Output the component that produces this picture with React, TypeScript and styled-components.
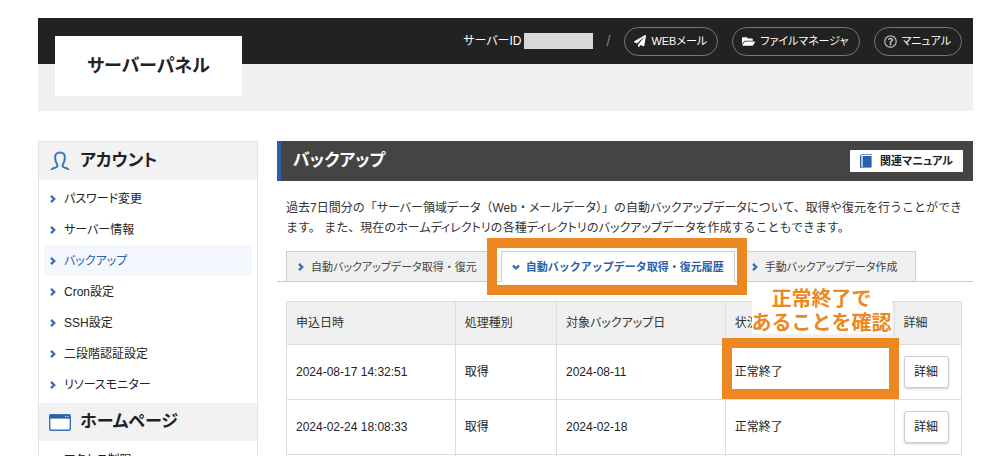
import React from "react";
import styled, { createGlobalStyle, css } from "styled-components";
import { FaPaperPlane, FaFolderOpen, FaRegQuestionCircle } from "react-icons/fa";

const BLUE = "#2b5fa9";
const ORANGE = "#ec8722";
const LINE = "#dddddd";

const GlobalStyle = createGlobalStyle`
  *, *::before, *::after { box-sizing: border-box; }
  body {
    margin: 0;
    background: #fff;
    color: #222;
    font-family: "Liberation Sans", "Noto Sans CJK JP", sans-serif;
    font-feature-settings: "palt";
    font-size: 12px;
    line-height: 20px;
  }
  h1, h2, p, ul { margin: 0; padding: 0; }
  ul { list-style: none; }
  a { color: inherit; text-decoration: none; }
  button { font: inherit; font-feature-settings: inherit; color: inherit; cursor: pointer; }
  svg { display: block; flex: none; }
`;

const Page = styled.div`
  height: calc(100vh - 19px);
  margin: 18px 27px 0 38px;
  overflow: hidden;
`;

const Header = styled.header`
  display: flex;
  justify-content: space-between;
  align-items: flex-start;
  min-height: 93px;
  padding: 0 11px 0 17px;
  background: linear-gradient(#222 0 46px, #f0f0f0 46px);
`;

const Logo = styled.a`
  display: flex;
  align-items: center;
  justify-content: center;
  width: 187px;
  height: 60px;
  margin-top: 18px;
  background: #fff;
  font-size: 18px;
  font-weight: 700;
`;

const Nav = styled.nav`
  display: flex;
  align-items: center;
  gap: 14px;
  height: 46px;
  color: #fff;
`;

const ServerId = styled.div`
  display: flex;
  align-items: center;
  gap: 2px;
`;

const Mask = styled.span`
  width: 69px;
  height: 16px;
  background: #d8d8d8;
`;

const Slash = styled.span`
  color: #888;
  font-size: 14px;
`;

const Pill = styled.a`
  display: flex;
  align-items: center;
  gap: 5px;
  height: 29px;
  padding: 0 10px 0 9px;
  border: 1px solid #777;
  border-radius: 15px;
  font-size: 11px;
`;

const Columns = styled.div`
  display: flex;
  align-items: flex-start;
  gap: 19px;
  margin-top: 30px;
`;

const Sidebar = styled.aside`
  flex: none;
  width: 220px;
  border: 1px solid #e4e4e4;
`;

const SideHeading = styled.h2`
  display: flex;
  align-items: center;
  gap: 9px;
  height: 38px;
  padding-left: 10px;
  background: #f2f2f2;
  font-size: 17px;
  line-height: 24px;
`;

const IconSlot = styled.span`
  display: flex;
  justify-content: center;
  width: 22px;
`;

const SideList = styled.ul`
  padding: 3px 5px;
`;

const SideLink = styled.a<{ $active?: boolean }>`
  display: flex;
  align-items: center;
  gap: 8px;
  height: 31px;
  padding-left: 6px;
  ${(p) => p.$active && css`
    background: #f4f8fe;
    color: ${BLUE};
  `}
`;

const Main = styled.main`
  flex: 1;
  min-width: 0;
`;

const TitleBar = styled.div`
  display: flex;
  align-items: center;
  justify-content: space-between;
  height: 40px;
  padding: 0 10px 0 12px;
  border-left: 4px solid ${BLUE};
  background: #444;
`;

const Title = styled.h1`
  color: #fff;
  font-size: 17px;
  line-height: 24px;
`;

const ManualButton = styled.button`
  display: flex;
  align-items: center;
  gap: 8px;
  height: 22px;
  padding: 0 10px;
  border: 0;
  border-radius: 1px;
  background: #fff;
  font-size: 11px;
  font-weight: 700;
`;

const Description = styled.p`
  margin: 17px 0 13px;
  padding-left: 9px;
  color: #333;
  white-space: nowrap;
`;

const FullWidth = styled.span`
  font-feature-settings: normal;
`;

const Tabs = styled.div`
  display: flex;
  gap: 5px;
  padding-left: 9px;
  border-bottom: 1px solid #ccc;
`;

const Tab = styled.button<{ $active?: boolean }>`
  position: relative;
  display: flex;
  align-items: center;
  gap: 7px;
  height: 31px;
  margin-bottom: -1px;
  padding: 0 18px 0 11px;
  border: 1px solid #ccc;
  background: #f0f0f0;
  color: #444;
  font-size: 11px;
  white-space: nowrap;
  ${(p) => p.$active && css`
    gap: 6px;
    padding: 0 10px;
    border-bottom-color: #fff;
    background: #fff;
    color: ${BLUE};
    font-weight: 700;
    font-feature-settings: normal;
  `}
`;

const TabHighlight = styled.span`
  position: absolute;
  z-index: 1;
  inset: -14px -13px -14px -15px;
  border: 10px solid ${ORANGE};
  pointer-events: none;
`;

const TableWrap = styled.div`
  padding: 19px 11px 0 9px;
`;

const Table = styled.table`
  width: 100%;
  table-layout: fixed;
  border-collapse: collapse;

  th, td {
    padding: 0 9px;
    border: 1px solid ${LINE};
    text-align: left;
    font-weight: 400;
  }
  th {
    height: 43px;
    background: #f0f0f0;
    color: #333;
  }
  td {
    position: relative;
    height: 55px;
  }
`;

const Column = styled.col<{ $share: number }>`
  width: ${(p) => p.$share}%;
`;

const CellHighlight = styled.span`
  position: absolute;
  z-index: 1;
  inset: -7px -5px 0 -4px;
  border: 10px solid ${ORANGE};
  pointer-events: none;
`;

const Note = styled.strong`
  position: absolute;
  right: 2px;
  bottom: calc(100% + 11px);
  width: 140px;
  background: #fff;
  color: ${ORANGE};
  font-family: "Noto Sans CJK JP", sans-serif;
  font-feature-settings: normal;
  font-size: 20px;
  line-height: 24px;
  text-align: center;
  white-space: nowrap;
`;

const DetailButton = styled.button`
  width: 45px;
  height: 32px;
  padding: 0;
  border: 1px solid #ccc;
  border-radius: 3px;
  background: #fff;
  box-shadow: 0 1px 2px rgba(0, 0, 0, 0.2);
`;

const Chevron = ({ down = false }: { down?: boolean }) => (
  <svg width={down ? 8 : 6} height={8} viewBox={down ? "0 0 8 8" : "0 0 6 8"} fill="none" stroke="#3a6fb5" strokeWidth="2.4">
    <path d={down ? "M0.9 2.5 4 5.3 7.1 2.5" : "M1 0.9 4.2 4 1 7.1"} />
  </svg>
);

const PersonIcon = () => (
  <svg width="20" height="20" viewBox="0 0 20 20" fill="none" stroke="#3f74bb" strokeWidth="2">
    <path d="M1.4 19C1.6 17.2 3.4 17.2 5.4 16.6C7.4 16 8 14.8 7.1 13.4C5.8 11.4 5.1 9.4 5.1 6.6C5.1 3 7 1.4 10 1.4S14.9 3 14.9 6.6C14.9 9.4 14.2 11.4 12.9 13.4C12 14.8 12.6 16 14.6 16.6C16.6 17.2 18.4 17.2 18.6 19" />
  </svg>
);

const WindowIcon = () => (
  <svg width="22" height="17" viewBox="0 0 22 17">
    <rect x="0.7" y="0.7" width="20.6" height="15.6" rx="1.2" fill="#fff" stroke="#3a6fb5" strokeWidth="1.4" />
    <path d="M1 1H21V4.6H1Z" fill={BLUE} />
    <path d="M16 2.5H17.2M18.4 2.5H19.6" stroke="#cfdff2" strokeWidth="1.2" />
  </svg>
);

const BookIcon = () => (
  <svg width="12" height="14" viewBox="0 0 12 14">
    <path d="M2 0.5H12M1 1.2V13" fill="none" stroke="#6c93cb" strokeWidth="1" />
    <path d="M0.5 13.4V1.6L1.6 0.5" fill="none" stroke={BLUE} strokeWidth="1" />
    <path d="M2.6 2H11.6V13.6H2.6Z" fill={BLUE} />
    <path d="M0 12.8H3V13.6H0Z" fill={BLUE} />
  </svg>
);

// Katakana is set proportionally; hiragana and punctuation keep their full width.
const Prose = ({ text }: { text: string }) => (
  <span>
    {text.split(/([ぁ-ん「」（）・、。]+)/).map((part, i) =>
      i % 2 ? <FullWidth key={i}>{part}</FullWidth> : part,
    )}
  </span>
);

const accountItems = [
  "パスワード変更",
  "サーバー情報",
  "バックアップ",
  "Cron設定",
  "SSH設定",
  "二段階認証設定",
  "リソースモニター",
];

const rows = [
  { date: "2024-08-17 14:32:51", kind: "取得", target: "2024-08-11", status: "正常終了", marked: true },
  { date: "2024-02-24 18:08:33", kind: "取得", target: "2024-02-18", status: "正常終了", marked: false },
  { date: "", kind: "", target: "", status: "", marked: false },
];

const SideItem = ({ label, active }: { label: string; active?: boolean }) => (
  <li>
    <SideLink href="#" $active={active}>
      <Chevron />
      {label}
    </SideLink>
  </li>
);

export default function App() {
  return (
    <>
      <GlobalStyle />
      <Page>
        <Header>
          <Logo href="#">サーバーパネル</Logo>
          <Nav>
            <ServerId>
              サーバーID
              <Mask />
            </ServerId>
            <Slash>/</Slash>
            <Pill href="#"><FaPaperPlane size={12} />WEBメール</Pill>
            <Pill href="#"><FaFolderOpen size={13} />ファイルマネージャ</Pill>
            <Pill href="#"><FaRegQuestionCircle size={13} color="#bbb" />マニュアル</Pill>
          </Nav>
        </Header>

        <Columns>
          <Sidebar>
            <SideHeading><IconSlot><PersonIcon /></IconSlot>アカウント</SideHeading>
            <SideList>
              {accountItems.map((label) => (
                <SideItem key={label} label={label} active={label === "バックアップ"} />
              ))}
            </SideList>
            <SideHeading><IconSlot><WindowIcon /></IconSlot>ホームページ</SideHeading>
            <SideList>
              <SideItem label="アクセス制限" />
            </SideList>
          </Sidebar>

          <Main>
            <TitleBar>
              <Title>バックアップ</Title>
              <ManualButton type="button"><BookIcon />関連マニュアル</ManualButton>
            </TitleBar>
            <Description>
              <Prose text="過去7日間分の「サーバー領域データ（Web・メールデータ）」の自動バックアップデータについて、取得や復元を行うことができ" />
              <br />
              <Prose text="ます。 また、現在のホームディレクトリの各種ディレクトリのバックアップデータを作成することもできます。" />
            </Description>
            <Tabs>
              <Tab type="button"><Chevron /><Prose text="自動バックアップデータ取得・復元" /></Tab>
              <Tab type="button" $active>
                <Chevron down />自動バックアップデータ取得・復元履歴
                <TabHighlight />
              </Tab>
              <Tab type="button"><Chevron />手動バックアップデータ作成</Tab>
            </Tabs>
            <TableWrap>
              <Table>
                <colgroup>
                  <Column $share={25} />
                  <Column $share={15} />
                  <Column $share={25} />
                  <Column $share={25} />
                  <Column $share={10} />
                </colgroup>
                <thead>
                  <tr>
                    <th scope="col">申込日時</th>
                    <th scope="col">処理種別</th>
                    <th scope="col">対象バックアップ日</th>
                    <th scope="col">状況</th>
                    <th scope="col">詳細</th>
                  </tr>
                </thead>
                <tbody>
                  {rows.map((row, i) => (
                    <tr key={i}>
                      <td>{row.date}</td>
                      <td>{row.kind}</td>
                      <td>{row.target}</td>
                      <td>
                        {row.status}
                        {row.marked && (
                          <>
                            <CellHighlight />
                            <Note>正常終了で<br />あることを確認</Note>
                          </>
                        )}
                      </td>
                      <td>{row.date && <DetailButton type="button">詳細</DetailButton>}</td>
                    </tr>
                  ))}
                </tbody>
              </Table>
            </TableWrap>
          </Main>
        </Columns>
      </Page>
    </>
  );
}
